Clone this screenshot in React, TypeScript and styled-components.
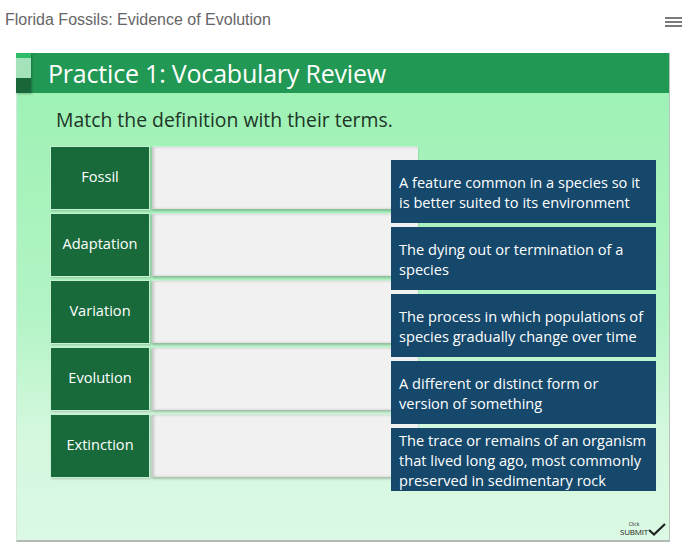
import styled, { createGlobalStyle } from "styled-components";

const GlobalStyle = createGlobalStyle`
  html, body { margin: 0; padding: 0; background: #ffffff; }
  body { font-family: "Open Sans", "Noto Sans", sans-serif; }
`;

const terms = ["Fossil", "Adaptation", "Variation", "Evolution", "Extinction"];

const definitions = [
  "A feature common in a species so it is better suited to its environment",
  "The dying out or termination of a species",
  "The process in which populations of species gradually change over time",
  "A different or distinct form or version of something",
  "The trace or remains of an organism that lived long ago, most commonly preserved in sedimentary rock",
];

const Page = styled.div`
  width: 697px;
  height: 547px;
  overflow: hidden;
  display: flex;
  flex-direction: column;
`;

const TopBar = styled.div`
  height: 53px;
  display: flex;
  align-items: flex-start;
  justify-content: space-between;
  padding: 11px 15px 0 5px;
  box-sizing: border-box;
`;

const CourseTitle = styled.div`
  font-family: "Liberation Sans", Arial, sans-serif;
  font-size: 16px;
  line-height: 18px;
  color: #666666;
`;

const Hamburger = styled.div`
  width: 17px;
  display: flex;
  flex-direction: column;
  gap: 2px;
  margin-top: 6px;

  span {
    display: block;
    height: 2px;
    background: #7a7a7a;
  }
`;

const Slide = styled.div`
  margin-left: 16px;
  width: 654px;
  height: 489px;
  box-sizing: border-box;
  border-left: 1px solid #d6e6da;
  border-right: 1px solid #b9c2bb;
  border-bottom: 2px solid #b4bab6;
  background: linear-gradient(
    to bottom,
    #9ef3b5 0%,
    #a0f2b6 12%,
    #b4f4c6 55%,
    #d4f8de 78%,
    #dbf9e4 100%
  );
  display: flex;
  flex-direction: column;
`;

const Header = styled.div`
  height: 40px;
  display: flex;
  background: #229855;
  margin-left: -1px;
`;

const Accent = styled.div`
  width: 15px;
  display: flex;
  flex-direction: column;
  box-shadow: 1px 1px 2px rgba(0, 0, 0, 0.25);
`;

const AccentPart = styled.div<{ $color: string; $h: number }>`
  height: ${(p) => p.$h}px;
  background: ${(p) => p.$color};
`;

const HeaderTitle = styled.h1`
  margin: 0 0 0 17px;
  font-weight: 400;
  font-size: 25px;
  line-height: 40px;
  color: #ffffff;
  letter-spacing: -0.2px;
`;

const Body = styled.div`
  flex: 1;
  display: flex;
  flex-direction: column;
  padding: 13px 0 0 33px;
  position: relative;
`;

const Instruction = styled.p`
  margin: 0 0 0 6px;
  font-size: 19.4px;
  line-height: 28px;
  color: #1d3527;
`;

const Board = styled.div`
  display: flex;
  margin-top: 12px;
`;

const LeftColumn = styled.div`
  display: flex;
  flex-direction: column;
  gap: 3px;
`;

const TermRow = styled.div`
  display: flex;
  gap: 2px;
  height: 64px;
`;

const Term = styled.div`
  width: 100px;
  box-sizing: border-box;
  border: 1px solid #c4f2d2;
  background: #186a3b;
  color: #ffffff;
  font-size: 14.6px;
  display: flex;
  align-items: center;
  justify-content: center;
  padding-bottom: 4px;
  box-shadow: 1px 1px 2px rgba(0, 0, 0, 0.2);
`;

const DropZone = styled.div`
  width: 266px;
  box-sizing: border-box;
  background: #f1f1f1;
  border-top: 1px solid #c9eed5;
  box-shadow: inset 2px 0 3px rgba(0, 0, 0, 0.18), 0 2px 2px rgba(0, 0, 0, 0.22);
  margin-bottom: 1px;
`;

const RightColumn = styled.div`
  display: flex;
  flex-direction: column;
  gap: 4px;
  margin-left: -27px;
  padding-top: 14px;
  position: relative;
  z-index: 1;
`;

const Definition = styled.div`
  width: 265px;
  height: 63px;
  box-sizing: border-box;
  background: #15486b;
  color: #ffffff;
  font-size: 14.6px;
  line-height: 20px;
  padding: 0 8px;
  display: flex;
  align-items: center;
`;

const Submit = styled.div`
  position: absolute;
  right: 3px;
  bottom: 4px;
  display: flex;
  align-items: flex-end;
  color: #222222;
`;

const SubmitLabel = styled.div`
  display: flex;
  flex-direction: column;
  align-items: center;
`;

const Small = styled.span`
  font-size: 5px;
  line-height: 6px;
`;

const Big = styled.span`
  font-size: 8px;
  line-height: 9px;
  letter-spacing: -0.2px;
`;

export default function App() {
  return (
    <>
      <GlobalStyle />
      <Page>
        <TopBar>
          <CourseTitle>Florida Fossils: Evidence of Evolution</CourseTitle>
          <Hamburger>
            <span />
            <span />
            <span />
          </Hamburger>
        </TopBar>
        <Slide>
          <Header>
            <Accent>
              <AccentPart $color="#2fbd6b" $h={5} />
              <AccentPart $color="#a3e2bb" $h={20} />
              <AccentPart $color="#18663a" $h={15} />
            </Accent>
            <HeaderTitle>Practice 1: Vocabulary Review</HeaderTitle>
          </Header>
          <Body>
            <Instruction>Match the definition with their terms.</Instruction>
            <Board>
              <LeftColumn>
                {terms.map((t) => (
                  <TermRow key={t}>
                    <Term>{t}</Term>
                    <DropZone />
                  </TermRow>
                ))}
              </LeftColumn>
              <RightColumn>
                {definitions.map((d) => (
                  <Definition key={d}>{d}</Definition>
                ))}
              </RightColumn>
            </Board>
            <Submit>
              <SubmitLabel>
                <Small>Click</Small>
                <Big>SUBMIT</Big>
              </SubmitLabel>
              <svg width="18" height="13" viewBox="0 0 18 13">
                <path d="M1 7 L6 11.5 L17 1" fill="none" stroke="#222" strokeWidth="2.2" />
              </svg>
            </Submit>
          </Body>
        </Slide>
      </Page>
    </>
  );
}
